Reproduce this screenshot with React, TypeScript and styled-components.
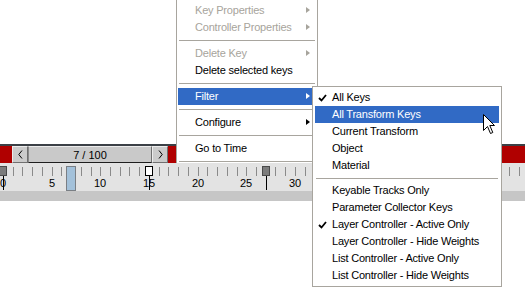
import styled, { createGlobalStyle } from "styled-components";

const GlobalStyle = createGlobalStyle`
  html, body {
    margin: 0;
    padding: 0;
    background: #ffffff;
  }
  body {
    font-family: "Liberation Sans", Arial, sans-serif;
    font-size: 11px;
    color: #000;
  }
`;

const Stage = styled.div`
  position: relative;
  width: 525px;
  height: 288px;
  overflow: hidden;
  padding-top: 144px;
  box-sizing: border-box;
`;

const Timeline = styled.div`
  display: flex;
  flex-direction: column;
  width: 525px;
`;

const TopRule = styled.div`
  height: 2px;
  background: #3b4046;
`;

const ScrollRow = styled.div`
  height: 17px;
  background: #b00000;
  display: flex;
  padding-left: 12px;
`;

const ScrollButton = styled.div`
  width: 16px;
  box-sizing: border-box;
  background: #cbcbcb;
  border: 1px solid;
  border-color: #ececec #707070 #707070 #ececec;
  display: flex;
  align-items: center;
  justify-content: center;
`;

const Thumb = styled.div`
  width: 124px;
  box-sizing: border-box;
  background: #c9c9c9;
  border: 1px solid;
  border-color: #ececec #707070 #1e1e1e #8a8a8a;
  display: flex;
  align-items: center;
  justify-content: center;
  font-size: 11px;
  padding-top: 1px;
`;

const Ruler = styled.div`
  position: relative;
  height: 28px;
  background: #e3e3e3;
`;

const Tick = styled.div`
  position: absolute;
  top: 4px;
  width: 1px;
  height: 9px;
  background: #8a8a8a;
`;

const Label = styled.div`
  position: absolute;
  top: 14px;
  width: 20px;
  margin-left: -10px;
  text-align: center;
  font-size: 11px;
  line-height: 13px;
  color: #000;
`;

const KeyBox = styled.div<{ $kind: "dark" | "white" }>`
  position: absolute;
  top: 3px;
  width: 8px;
  height: 10px;
  margin-left: -4px;
  box-sizing: border-box;
  border: 1px solid ${(p) => (p.$kind === "white" ? "#000" : "#4a4a4a")};
  background: ${(p) => (p.$kind === "white" ? "#fff" : "#7c7c7c")};
`;

const KeyLine = styled.div`
  position: absolute;
  top: 13px;
  width: 1px;
  height: 14px;
  background: #000;
`;

const TimeSlider = styled.div`
  position: absolute;
  top: 3px;
  width: 10px;
  height: 25px;
  margin-left: -5px;
  box-sizing: border-box;
  background: #a3c1da;
  border: 1px solid #7a7f85;
`;

const BottomBand = styled.div`
  height: 10px;
  background: #c6c6c6;
`;

const Menu = styled.div<{ $left: number; $top: number; $width: number; $padX: number; $height?: number }>`
  position: absolute;
  left: ${(p) => p.$left}px;
  top: ${(p) => p.$top}px;
  width: ${(p) => p.$width}px;
  box-sizing: border-box;
  background: #ffffff;
  border: 1px solid #a8a59e;
  padding: 2px ${(p) => p.$padX}px;
  display: flex;
  flex-direction: column;
  ${(p) => (p.$height ? `height: ${p.$height}px; overflow: hidden; border-bottom: none;` : "")}
`;

const MenuItem = styled.div<{ $disabled?: boolean; $active?: boolean }>`
  position: relative;
  flex-shrink: 0;
  height: 17px;
  line-height: 17px;
  padding-left: 17px;
  white-space: nowrap;
  font-size: 11px;
  letter-spacing: -0.2px;
  background: ${(p) => (p.$active ? "#316ac5" : "transparent")};
  color: ${(p) => (p.$active ? "#fff" : p.$disabled ? "#a7a49c" : "#000")};
`;

const Separator = styled.div<{ $h: number }>`
  position: relative;
  flex-shrink: 0;
  height: ${(p) => p.$h}px;
  &::after {
    content: "";
    position: absolute;
    left: 1px;
    right: 1px;
    top: 4px;
    height: 1px;
    background: #a8a59e;
  }
`;

const Arrow = styled.span<{ $color: string }>`
  position: absolute;
  right: 6px;
  top: 5px;
  width: 0;
  height: 0;
  border-top: 3.5px solid transparent;
  border-bottom: 3.5px solid transparent;
  border-left: 4px solid ${(p) => p.$color};
`;

const Check = styled.svg`
  position: absolute;
  left: 3px;
  top: 5px;
`;

const Cursor = styled.svg`
  position: absolute;
  left: 483px;
  top: 114px;
`;

const FRAME = 9.73;
const fx = (f: number) => 3 + FRAME * f;

type Entry =
  | { sep: true }
  | { label: string; disabled?: boolean; active?: boolean; sub?: boolean; checked?: boolean };

const mainMenu: Entry[] = [
  { label: "Key Properties", disabled: true, sub: true },
  { label: "Controller Properties", disabled: true, sub: true },
  { sep: true },
  { label: "Delete Key", disabled: true, sub: true },
  { label: "Delete selected keys" },
  { sep: true },
  { label: "Filter", active: true, sub: true },
  { sep: true },
  { label: "Configure", sub: true },
  { sep: true },
  { label: "Go to Time" },
  { sep: true },
];

const filterMenu: Entry[] = [
  { label: "All Keys", checked: true },
  { label: "All Transform Keys", active: true },
  { label: "Current Transform" },
  { label: "Object" },
  { label: "Material" },
  { sep: true },
  { label: "Keyable Tracks Only" },
  { label: "Parameter Collector Keys" },
  { label: "Layer Controller - Active Only", checked: true },
  { label: "Layer Controller - Hide Weights" },
  { label: "List Controller - Active Only" },
  { label: "List Controller - Hide Weights" },
];

function MenuEntries({ items, sepH }: { items: Entry[]; sepH: number }) {
  return (
    <>
      {items.map((it, i) => {
        if ("sep" in it) return <Separator key={i} $h={sepH} />;
        const arrowColor = it.active ? "#fff" : it.disabled ? "#a7a49c" : "#000";
        return (
          <MenuItem key={i} $disabled={it.disabled} $active={it.active}>
            {it.checked && (
              <Check width="9" height="8" viewBox="0 0 9 8">
                <path d="M1 4 L3.5 6.5 L8 1" fill="none" stroke="#000" strokeWidth="1.8" />
              </Check>
            )}
            {it.label}
            {it.sub && <Arrow $color={arrowColor} />}
          </MenuItem>
        );
      })}
    </>
  );
}

function App() {
  const frames = Array.from({ length: 54 }, (_, i) => i);
  // labels past 30 sit under the Filter menu
  const labels = [0, 5, 10, 15, 20, 25, 30];
  const keys: { f: number; kind: "dark" | "white" }[] = [
    { f: 0, kind: "dark" },
    { f: 15, kind: "white" },
    { f: 27, kind: "dark" },
  ];

  return (
    <>
      <GlobalStyle />
      <Stage>
        <Timeline>
          <TopRule />
          <ScrollRow>
            <ScrollButton>
              <svg width="5" height="9" viewBox="0 0 5 9">
                <path d="M4 0.5 L0.8 4.5 L4 8.5" fill="none" stroke="#000" strokeWidth="1" />
              </svg>
            </ScrollButton>
            <Thumb>7 / 100</Thumb>
            <ScrollButton>
              <svg width="5" height="9" viewBox="0 0 5 9">
                <path d="M1 0.5 L4.2 4.5 L1 8.5" fill="none" stroke="#000" strokeWidth="1" />
              </svg>
            </ScrollButton>
          </ScrollRow>
          <Ruler>
            {frames.map((f) => (
              <Tick key={f} style={{ left: Math.round(fx(f)) }} />
            ))}
            {labels.map((f) => (
              <Label key={f} style={{ left: Math.round(fx(f)) }}>
                {f}
              </Label>
            ))}
            <TimeSlider style={{ left: Math.round(fx(7)) }} />
            {keys.map((k) => (
              <KeyBox key={k.f} $kind={k.kind} style={{ left: Math.round(fx(k.f)) }} />
            ))}
            {keys.map((k) => (
              <KeyLine key={k.f} style={{ left: Math.round(fx(k.f)) }} />
            ))}
          </Ruler>
          <BottomBand />
        </Timeline>

        <Menu $left={176} $top={-1} $width={142} $padX={1} $height={164}>
          <MenuEntries items={mainMenu} sepH={9} />
        </Menu>

        <Menu $left={312} $top={86} $width={190} $padX={2}>
          <MenuEntries items={filterMenu} sepH={8} />
        </Menu>

        <Cursor width="13" height="21" viewBox="0 0 13 21">
          <path
            d="M0.5 0.5 L0.5 16.5 L4.5 12.5 L7.5 19.5 L9.8 18.5 L6.8 11.5 L11.5 11.5 Z"
            fill="#fff"
            stroke="#000"
            strokeWidth="1"
            strokeLinejoin="miter"
          />
        </Cursor>
      </Stage>
    </>
  );
}

export default App;
